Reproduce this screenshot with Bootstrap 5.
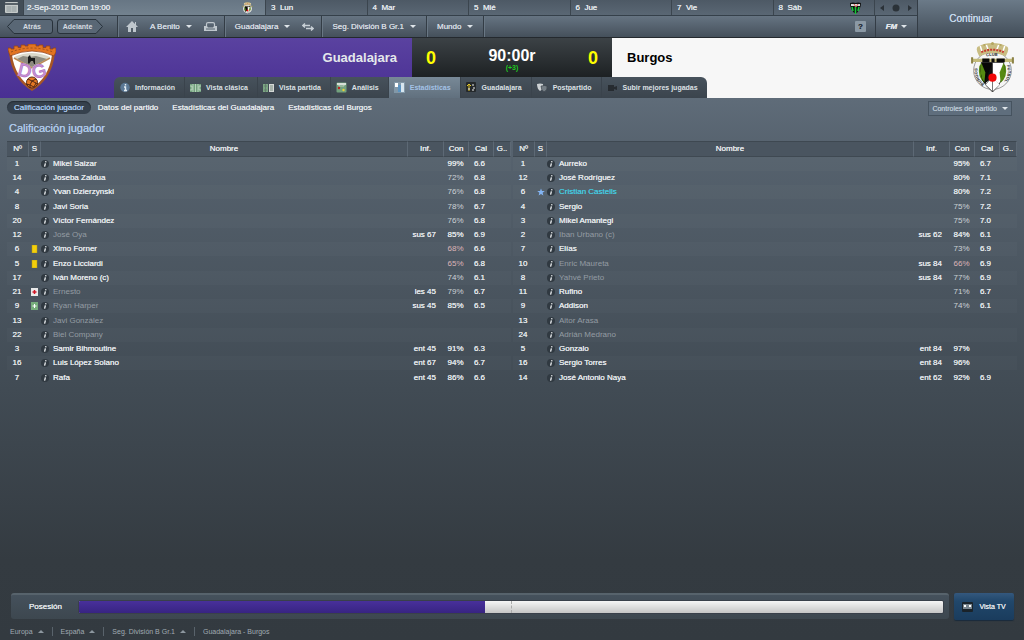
<!DOCTYPE html>
<html lang="es">
<head>
<meta charset="utf-8">
<meta name="viewport" content="width=device-width, initial-scale=1">
<title>Guadalajara - Burgos</title>
<link href="https://cdn.jsdelivr.net/npm/bootstrap@5.3.0/dist/css/bootstrap.min.css" rel="stylesheet">
<style>
body{font:8px/12px "Liberation Sans",Arial,sans-serif;color:#e4e8eb;background:linear-gradient(#5f6c79 98px,#56626e 150px,#414b54 390px,#343b41 560px,#333a40) fixed;text-shadow:0 0 currentColor}
button{font:inherit;color:inherit;background:none;border:0;padding:0;text-shadow:inherit}
a{color:inherit;text-decoration:none}
svg{display:block;flex:none}
.caret{border:3px solid transparent;border-top-color:#dfe5ea;border-bottom:0;width:6px;height:3px}
.caret-up{border:3px solid transparent;border-bottom:3px solid #8d979f;border-top:0;width:6px;height:3px}
.topbar{border-bottom:1px solid #24292e;height:38px;color:#e3e8ec}
.days{height:16px;background:linear-gradient(#4d5965,#5a6774);border-bottom:1px solid #35404a}
.days>*{border-left:1px solid #3b454e;padding:0 5px}
.days .cal{flex:0 0 22px;border:0;background:#424d57}
.days .today{flex:0 0 242px;padding:0 12px 0 3px;background:linear-gradient(#677684,#73828f)}
.mover{flex:0 0 43px;color:#2b3238}
.tools{height:21px;background:linear-gradient(#667482,#45505b)}
.seg{border-right:1px solid #333c45;box-shadow:1px 0 #697784;padding:0 7px 0 10px;gap:12px;color:#d5dbe0}
.seg.history{gap:4px;padding:0 14px 0 7px}
.seg.home{padding-left:8px}
.seg.last{padding-right:10px}
.drop{gap:6px}
.arrow{position:relative;width:46px;height:15px;font-size:7px;font-weight:bold;text-shadow:none}
.arrow svg{position:absolute;inset:0;width:100%;height:100%}
.arrow span{position:relative}
.arrow.prev{padding-left:4px}
.arrow.next{padding-right:5px}
.helper{width:11px;height:11px;line-height:11px;background:#8b99a5;border-radius:1px;color:#28313a;margin-right:9px;text-align:center;font-weight:bold}
.fm{width:42px;border-left:1px solid #333c45;font-style:italic;font-weight:bold}
.continue{flex:0 0 107px;font-size:10px;color:#c6d8ea;background:linear-gradient(#6b7a88,#434e59);border-left:1px solid #333c45}
.match{height:60px;background:linear-gradient(90deg,transparent 50%,#f7f7f7 50%),linear-gradient(#5a42a0,#492f93)}
.side{flex:0 0 114px}
.side.away{padding:4px 10px 0 0}
.side.home{padding:6px 0 0 8px}
.score{height:39px}
.team{flex:1;font-size:13px;font-weight:bold;text-shadow:none;line-height:40px;padding:0 15px}
.board{flex:0 0 200px;background:linear-gradient(#3c4246,#1d2123);padding:0 14px;line-height:20px;text-shadow:none}
.goals{font-size:18px;font-weight:bold;color:#ff0}
.clock{font-size:16px;font-weight:bold;line-height:16px;color:#fff}
.extra{font-size:7px;line-height:7px;color:#1fc81f;font-weight:bold}
.tabs{height:21px;font-size:7px;font-weight:bold;text-shadow:none;background:linear-gradient(#47525c,#3b444d);border-radius:6px 6px 0 0;overflow:hidden;color:#dde1e5}
.tabs a{padding:0 9px 0 5px;gap:5px;border-left:1px solid #3a434c;white-space:nowrap}
.tabs a:first-child{border:0;padding-left:6px}
.tabs .on{background:linear-gradient(#788997,#61707e);color:#a4c2e6}
.subnav{padding:3px 12px 0 7px;height:20px}
.subnav a{padding:0 7px;line-height:13px;border-radius:7px}
.subnav .on{background:#36414d;color:#a7c5ea;box-shadow:inset 0 1px 1px #252d36}
.controls{height:15px;font-size:7px;gap:5px;padding:0 3px;color:#bac6d3;border:1px solid #46535f;background:#5f6e7d}
.title{font-size:11px;line-height:14px;color:#aec8e8;margin:3px 9px 6px}
.lists{gap:2px;padding:0 7px;flex-grow:1}
.squad{table-layout:fixed;width:100%;margin:0;border-collapse:separate;border-spacing:0}
.squad th,.squad td{padding:0;font-weight:normal;overflow:hidden;white-space:nowrap}
.squad th{height:15px;line-height:14px;text-align:center;background:#4a5560;border-right:1px solid #5d6975;border-top:1px solid #3e4851;border-bottom:1px solid #3f4952}
.squad td{height:14px;line-height:14px}
.squad tr:nth-child(4n) td{height:15px}
.squad tbody tr:nth-child(odd){background:rgba(255,255,255,.02)}
.squad td:nth-child(1),.squad td:nth-child(5){text-align:center}
.squad td:nth-child(1),.squad td:nth-child(5){padding-right:2px}
.squad td:nth-child(4),.squad td:nth-child(6){text-align:right;padding-right:8px}
.squad td:nth-child(6){padding-right:9px}
.squad td svg{margin:auto}
.person{gap:4px}
.squad .person svg{margin:0}
.out{color:#949ca3;text-shadow:none}
.star{color:#45c6dd}
.mid{color:#ccd2d7;text-shadow:none}
.low{color:#dcb4b8;text-shadow:none}
.bottom{gap:5px;padding:0 10px 0 11px}
.possession{height:26px;background:linear-gradient(#45515c,#3d474f);border-top:2px solid #57636c;border-radius:3px;padding:0 5px 0 18px;gap:16px}
.possession .progress{height:14px;border-radius:2px;background:linear-gradient(#f5f5f5,#c5c5c5);border:1px solid #39404a;position:relative}
.possession .progress-bar{background:linear-gradient(#48309b,#382482)}
.half{position:absolute;left:50%;top:0;bottom:0;border-left:1px dashed #aaa}
.tv{width:60px;height:27px;font-size:7px;background:linear-gradient(#34587e,#21476b 30%,#1a3c5d);border-radius:2px;gap:6px;box-shadow:0 1px 1px #192b3c}
.crumbs{height:20px;padding:2px 10px 0;font-size:7px;color:#a0aab2;text-shadow:none}
.crumbs>*+*{border-left:1px solid #59636b;margin-left:8px;padding-left:8px}
.crumbs>*{gap:5px;line-height:9px}
</style>
</head>
<body class="d-flex flex-column min-vh-100">

<svg width="0" height="0" class="position-absolute" aria-hidden="true">
<symbol id="info" viewBox="0 0 8 8"><circle cx="4" cy="4" r="4" fill="#303941"/><path d="M4.9 1.2 4.7 2.3M4.4 3.3 3.6 6.6" stroke="#eef1f3" stroke-width="1.3"/></symbol>
<symbol id="burgos" viewBox="0 0 42 50">
<circle cx="21" cy="28" r="18.5" fill="#f5f5f5" stroke="#777" stroke-width=".7"/>
<path d="M8 14Q3 5 8 4Q13 1 21 1Q29 1 34 4Q39 5 34 14Q21 8 8 14Z" fill="#c9bd83"/><path d="M9 4l2 6M15 3l2 5M27 3l-2 5M33 4l-2 6" stroke="#fff" stroke-width="1.5"/><path d="M10 10Q21 5 32 10" fill="none" stroke="#c53a2d" stroke-width="2" stroke-dasharray="2 1"/><circle cx="21" cy="1.5" r="1.5" fill="#b5a660"/><circle cx="13" cy="3" r="1" fill="#b5a660"/><circle cx="29" cy="3" r="1" fill="#b5a660"/>
<path d="M8 24Q6 34 13 40Q15 32 12 21Q9 21 8 24M34 24Q36 34 29 40Q27 32 30 21Q33 21 34 24" fill="#568a12"/>
<path d="M10 20H32Q34 38 21 49Q8 38 10 20Z" fill="#fff" stroke="#222" stroke-width=".8"/><path d="M10 20H21V34L13 41Q8 34 10 20M21 35L28 42 21 49Z" fill="#070707"/><path d="M21 20 13 41 21 35Z" fill="#111"/><path d="M10 20Q8 33 13 40L14 30Z" fill="#568a12"/><path d="M32 20Q34 33 29 40L28 30Z" fill="#568a12"/><path d="M21 34 28 42 21 48.500Z" fill="#fff"/><path d="M21 34 14 42 21 48.500Z" fill="#fff" stroke="#111" stroke-width=".5"/>
<path d="M1 18H41" stroke="#c2ba7a" stroke-width="3"/><path d="M11 18H18M25 18H33M20 18h3" stroke="#0a0a0a" stroke-width="3.5"/><path d="M1 15v6M41 15v6" stroke="#8c8347" stroke-width="2"/>
<circle cx="21" cy="35" r="4" fill="#f00808"/>
</symbol>
</svg>

<header>
<div class="topbar d-flex">
 <div class="flex-grow-1">
  <div class="days d-flex">
   <button class="cal d-flex align-items-center justify-content-center" aria-label="Calendario"><svg width="13" height="11" viewBox="0 0 13 11"><rect width="13" height="11" rx="1" fill="#c5cac9"/><path d="M0 1h13v2H0z" fill="#596269"/><path d="M1 5h11M1 7h11M1 9h11M3 4v6M5 4v6M8 4v6M10 4v6" stroke="#8e979b" stroke-width=".6"/></svg></button>
   <div class="today d-flex align-items-center justify-content-between"><span>2-Sep-2012 Dom 19:00</span><svg width="11" height="12"><use href="#burgos"/></svg></div>
   <div class="flex-fill w-25 d-flex align-items-center">3&nbsp; Lun</div>
   <div class="flex-fill w-25 d-flex align-items-center">4&nbsp; Mar</div>
   <div class="flex-fill w-25 d-flex align-items-center">5&nbsp; Mié</div>
   <div class="flex-fill w-25 d-flex align-items-center">6&nbsp; Jue</div>
   <div class="flex-fill w-25 d-flex align-items-center">7&nbsp; Vie</div>
   <div class="flex-fill w-25 d-flex align-items-center justify-content-between"><span>8&nbsp; Sáb</span><svg class="me-2" width="11" height="12" viewBox="0 0 11 12"><path d="M0 1Q3 0 5.5 1Q8 0 11 1Q11 8 5.5 12Q0 8 0 1" fill="#111"/><path d="M1 2h9v2H1z" fill="#ddd"/><path d="M2 5l1 4M5.5 4v8M9 5l-1 4" stroke="#18c43b" stroke-width="1.6"/><path d="M4 2l2 3 2-3" stroke="#d55" fill="none"/></svg></div>
   <div class="mover d-flex align-items-center"><svg width="32" height="8" viewBox="0 0 32 8"><path d="M4 1v6L0 4zM28 1v6l4-3z" fill="#2b3238"/><circle cx="16" cy="4" r="3.5" fill="#2b3238"/></svg></div>
  </div>
  <nav class="tools d-flex align-items-stretch">
   <div class="seg history d-flex align-items-center">
    <button class="arrow prev"><svg viewBox="0 0 46 15"><path d="M7 .5H43Q45.5.5 45.5 3V12Q45.5 14.5 43 14.5H7L.5 7.5Z" fill="#596775" stroke="#28323b"/></svg><span>Atrás</span></button>
    <button class="arrow next"><svg viewBox="0 0 46 15"><path d="M39 .5H3Q.5.5.5 3V12Q.5 14.5 3 14.5H39L45.5 7.5Z" fill="#596775" stroke="#28323b"/></svg><span>Adelante</span></button>
   </div>
   <div class="seg home d-flex align-items-center">
    <a href="#" aria-label="Inicio"><svg width="12" height="11" viewBox="0 0 12 11"><path d="M6 0 0 6h2v5h3V7h2v4h3V6h2L10 4V1H9v2z" fill="#bfc7cd"/></svg></a>
    <button class="drop d-flex align-items-center">A Benito <span class="caret"></span></button>
    <a href="#" aria-label="Club"><svg width="13" height="9" viewBox="0 0 13 9"><path d="M2.500 4V2Q2.500.7 4 .7H9Q10.500.7 10.500 2V4" fill="none" stroke="#bfc7cd" stroke-width="1.200"/><path d="M0 4H3L4 5.500H9L10 4H13V9H0Z" fill="#bfc7cd"/><path d="M2 7h9" stroke="#55626e"/></svg></a>
   </div>
   <div class="seg d-flex align-items-center"><button class="drop d-flex align-items-center">Guadalajara <span class="caret"></span></button>
    <a href="#" aria-label="Cambiar"><svg width="12" height="8" viewBox="0 0 12 8"><path d="M8 2.500H1M3 .5.700 2.500 3 4.500M4 5.500h7M9 3.500l2.300 2L9 7.500" fill="none" stroke="#c8d0d6" stroke-width="1.400"/></svg></a></div>
   <button class="seg last drop d-flex align-items-center">Seg. División B Gr.1 <span class="caret"></span></button>
   <button class="seg last drop d-flex align-items-center">Mundo <span class="caret"></span></button>
   <div class="ms-auto d-flex align-items-center"><button class="helper" aria-label="Ayuda">?</button></div>
   <button class="fm d-flex align-items-center justify-content-center gap-1">FM <span class="caret"></span></button>
  </nav>
 </div>
 <button class="continue">Continuar</button>
</div>

<div class="match d-flex">
 <div class="side home">
  <svg width="48" height="48" viewBox="0 0 48 48"><path d="M1 9C3 27 11 39 24 47C37 39 45 27 47 9Z" fill="#a75625"/><path d="M4 11C6 26 13 37 24 44C35 37 42 26 44 11Q24 1 4 11" fill="#fff"/><path d="M6 13Q24 5 42 13L24 24Z" fill="#dad8ca"/><path d="M9 15l6-3 6 1 7-1 11 3-15 8z" fill="#8d8b81"/><path d="M20 19v-6l2-2 1 3h4v6h-1l-1-3h-2l-2 3z" fill="#18191a"/><path d="M6 14 24 24 42 14" fill="none" stroke="#b98a59" stroke-width="1.5"/>
  <path d="M0 6V4H3V5H6V2H10V3.5H13V1H17V2H20V0H28V2H31V1H35V3.5H38V2H42V5H45V4H48V8L46 12Q24 2 2 12Z" fill="#e27422" stroke="#92441c" stroke-width=".8"/><path d="M3 8Q24 0 45 8" fill="none" stroke="#98501f" stroke-dasharray="2 2"/>
  <g font-size="18" fill="#b774c8" stroke="#b774c8"><text transform="translate(9 31) rotate(14)">D</text><text transform="translate(26 35) rotate(-16)">G</text></g>
  <circle cx="24" cy="38.5" r="5.5" fill="#e77924" stroke="#5b2d15"/><path d="M20 35l4 2 4-2M24 37l-2 4-4-1M22 41l4 2 2-4-4-2M22 41v3M28 39l2 1" fill="none" stroke="#512813"/></svg>
 </div>
 <div class="flex-grow-1 d-flex flex-column">
  <div class="score d-flex">
   <div class="team text-end">Guadalajara</div>
   <div class="board d-flex align-items-center justify-content-between"><span class="goals">0</span><div class="text-center pt-1"><div class="clock">90:00r</div><div class="extra">(+3)</div></div><span class="goals">0</span></div>
   <div class="team text-black">Burgos</div>
  </div>
  <nav class="tabs d-flex align-self-start">
   <a href="#" class="d-flex align-items-center"><svg width="10" height="11" viewBox="0 0 10 11"><circle cx="5" cy="5.5" r="4.7" fill="#5b7895"/><path d="M5.5 2v1.600M4 5h1.500v3.500M4 8.500h3" stroke="#e4edf3" stroke-width="1.4" fill="none"/></svg>Información</a>
   <a href="#" class="d-flex align-items-center"><svg width="11" height="8" viewBox="0 0 11 8"><path d="M0 0h11v8H0z" fill="#71a07c"/><path d="M5.5 0v8M0 2h2v4H0M11 2H9v4h2M3 0v8M8 0v8" fill="none" stroke="#c9e0cc" stroke-width=".8"/></svg>Vista clásica</a>
   <a href="#" class="d-flex align-items-center"><svg width="11" height="8" viewBox="0 0 11 8"><path d="M0 0h5v8H0z" fill="#7ba583"/><path d="M6 0h5v8H6z" fill="#d5d8d6"/><path d="M1 2h3M1 6h3M2.5 0v8M7 2h3M7 4h3M7 6h3" stroke="#60796a" stroke-width=".8"/></svg>Vista partida</a>
   <a href="#" class="d-flex align-items-center"><svg width="11" height="11" viewBox="0 0 11 11"><rect x=".5" y=".5" width="10" height="10" rx="1" fill="#73a17e"/><path d="M1 1h9v2H1z" fill="#d7dfd8"/><path d="M3 1v3h5V1" fill="none" stroke="#d7dfd8" stroke-width=".7"/><circle cx="3" cy="6" r="1.2" fill="#ba2020"/><circle cx="7.5" cy="8" r="1.2" fill="#ead037"/></svg>Análisis</a>
   <a href="#" class="on d-flex align-items-center" aria-current="page"><svg width="11" height="11" viewBox="0 0 11 11"><path d="M0 0h11v11H0z" fill="#8298a8"/><path d="M1 1h3v4H1z" fill="#fff"/><path d="M4 3h3v7H4z" fill="#5b93c1"/><path d="M7 1h3v9H7z" fill="#d7e6ef"/></svg>Estadísticas</a>
   <a href="#" class="d-flex align-items-center"><svg width="11" height="11" viewBox="0 0 11 11"><rect width="10" height="10" rx="1" fill="#25292b"/><path d="M3 9V3M1 4l2-2 2 2" stroke="#e5c827" fill="none"/><path d="M6 3h2M7 6h2M2 7h2M6 8h2" stroke="#eee"/></svg>Guadalajara</a>
   <a href="#" class="d-flex align-items-center"><svg width="11" height="10" viewBox="0 0 11 10"><path d="M0 1Q3 0 6 1Q7 6 3 8Q0 6 0 1" fill="#ccd1d4"/><path d="M4 3Q8 2 10 3Q11 7 7 9Q4 7 4 3" fill="#757e85" stroke="#343c43" stroke-width=".6"/></svg>Postpartido</a>
   <a href="#" class="d-flex align-items-center"><svg width="11" height="8" viewBox="0 0 11 8"><path d="M1 1h6v2l3-1v4L7 5v2H1z" fill="#262b30"/></svg>Subir mejores jugadas</a>
  </nav>
 </div>
 <div class="side away d-flex justify-content-end"><svg width="43" height="51" viewBox="0 0 42 50"><use href="#burgos" width="42" height="50"/>
  <path id="arcClub" d="M13 15Q21 12 31 15" fill="none"/><path id="arcLeft" d="M13 41A15 15 0 0 1 7 23" fill="none"/><path id="arcRight" d="M35 23A15 15 0 0 1 28 42" fill="none"/>
  <g font-size="4" font-weight="bold" fill="#222"><text><textPath href="#arcClub" startOffset="2">CLUB</textPath></text><text><textPath href="#arcLeft">BURGOS</textPath></text><text><textPath href="#arcRight">FUTBOL</textPath></text></g></svg></div>
</div>
</header>

<main class="d-flex flex-column flex-grow-1">
 <nav class="subnav d-flex align-items-start">
  <a href="#" class="on" aria-current="page">Calificación jugador</a><a href="#">Datos del partido</a><a href="#">Estadísticas del Guadalajara</a><a href="#">Estadísticas del Burgos</a>
  <button class="controls d-flex align-items-center ms-auto">Controles del partido <span class="caret"></span></button>
 </nav>
 <h1 class="title">Calificación jugador</h1>
 <div class="lists d-flex align-items-start">
  <table class="squad" data-team="home"></table>
  <table class="squad" data-team="away"></table>
 </div>
 <div class="bottom d-flex">
  <div class="possession flex-grow-1 d-flex align-items-center"><span>Posesión</span>
   <div class="progress flex-grow-1" role="progressbar" aria-label="Posesión" aria-valuenow="47" aria-valuemin="0" aria-valuemax="100"><div class="progress-bar" style="width:47%"></div><span class="half"></span></div></div>
  <button class="tv d-flex align-items-center justify-content-center"><svg width="11" height="10" viewBox="0 0 11 10"><rect width="11" height="10" rx="1" fill="#1a232a"/><path d="M1 2h9v5H1z" fill="#78858e"/><path d="M2 3h2v2H2zM7 3h2v2H7z" fill="#fff"/></svg>Vista TV</button>
 </div>
</main>
<footer class="crumbs d-flex align-items-center"><a href="#" class="d-flex align-items-center">Europa <span class="caret-up"></span></a><a href="#" class="d-flex align-items-center">España <span class="caret-up"></span></a><a href="#" class="d-flex align-items-center">Seg. División B Gr.1 <span class="caret-up"></span></a><span>Guadalajara - Burgos</span></footer>

<script src="https://cdn.jsdelivr.net/npm/bootstrap@5.3.0/dist/js/bootstrap.bundle.min.js"></script>
<script>
// number | status | name | event | condition | rating | name style
const squads = {
home: `1||Mikel Saizar||99|6.6|
14||Joseba Zaldua||72|6.8|
4||Yvan Dzierzynski||76|6.8|
8||Javi Soria||78|6.7|
20||Víctor Fernández||76|6.8|
12||José Oya|sus 67|85|6.9|out
6|card|Ximo Forner||68|6.6|
5|card|Enzo Licciardi||65|6.8|
17||Iván Moreno (c)||74|6.1|
21|injury|Ernesto|les 45|79|6.7|out
9|treated|Ryan Harper|sus 45|85|6.5|out
13||Javi González||||out
22||Biel Company||||out
3||Samir Bihmoutine|ent 45|91|6.3|
16||Luis López Solano|ent 67|94|6.7|
7||Rafa|ent 45|86|6.6|`,
away: `1||Aurreko||95|6.7|
12||José Rodríguez||80|7.1|
6|best|Cristian Castells||80|7.2|star
4||Sergio||75|7.2|
3||Mikel Amantegi||75|7.0|
2||Iban Urbano (c)|sus 62|84|6.1|out
7||Elías||73|6.9|
10||Enric Maureta|sus 84|66|6.9|out
8||Yahvé Prieto|sus 84|77|6.9|out
11||Rufino||71|6.7|
9||Addison||74|6.1|
13||Aitor Arasa||||out
24||Adrián Medrano||||out
5||Gonzalo|ent 84|97||
16||Sergio Torres|ent 84|96||
14||José Antonio Naya|ent 62|92|6.9|`
};
const svg = s => `<svg width="8" height="8" viewBox="0 0 8 8">${s}</svg>`;
const marks = {
 '': '',
 card: svg('<path d="M1 0h5v8H1z" fill="#f4cf0c" stroke="#b49a13" stroke-width=".5"/>'),
 injury: svg('<path d="M0 0h7v8H0z" fill="#e9e9e9"/><path d="M3.5 2v4M1.500 4h4" stroke="#d01525" stroke-width="1.5"/>'),
 treated: svg('<path d="M0 0h7v8H0z" fill="#76ad7b"/><path d="M3.5 2v4M1.500 4h4" stroke="#fff"/>'),
 best: svg('<path d="M4 .5l1 2.600h2.800L5.600 4.800l.8 2.700L4 5.900 1.600 7.500l.8-2.700L.2 3.100H3z" fill="#84b5f4"/>')
};
const info = '<svg width="8" height="8"><use href="#info"/></svg>';
document.querySelectorAll('.squad').forEach(t => {
 const rows = squads[t.dataset.team].split('\n').map(r => {
  const [n, m, name, ev, con, cal, cls] = r.split('|');
  const tone = con < 70 ? 'low' : con < 80 ? 'mid' : '';
  return `<tr><td>${n}</td><td>${marks[m]}</td><td><div class="person d-flex align-items-center">${info}<span class="${cls}">${name}</span></div></td><td>${ev}</td><td class="${tone}">${con && con + '%'}</td><td>${cal}</td><td></td></tr>`;
 }).join('');
 t.innerHTML = `<colgroup>${[22, 12, '', 36, 25, 25, 17].map(w => `<col${w && ` style="width:${w}px"`}>`).join('')}</colgroup>
 <thead><tr><th>Nº</th><th>S</th><th>Nombre</th><th>Inf.</th><th>Con</th><th>Cal</th><th>G..</th></tr></thead><tbody>${rows}</tbody>`;
});
</script>
</body>
</html>
